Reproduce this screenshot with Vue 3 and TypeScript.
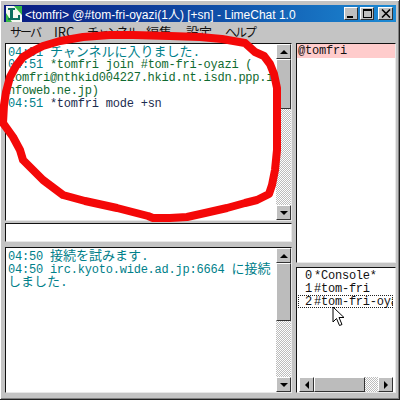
<template>
  <div class="window">
    <div class="titlebar">
      <svg class="app-icon" width="16" height="16" viewBox="0 0 16 16">
        <rect width="16" height="16" fill="#f4f8f0" />
        <path d="M8 0h8v9z" fill="#38b848" />
        <path d="M0 7l6 9H0z" fill="#38b848" />
        <path d="M2 2h7v2H7v8h5V9h2v5H2v-2h2V4H2z" fill="#0a6e5e" />
      </svg>
      <span class="title-text">&lt;tomfri&gt; @#tom-fri-oyazi(1人) [+sn] - LimeChat 1.0</span>
      <div class="title-buttons">
        <button class="win-btn"><i class="glyph-min" /></button>
        <button class="win-btn"><i class="glyph-max" /></button>
        <button class="win-btn close">
          <svg width="10" height="9" viewBox="0 0 10 9"><path d="M1 0.5l8 8M9 0.5l-8 8" stroke="#000" stroke-width="1.6" /></svg>
        </button>
      </div>
    </div>

    <div class="menubar">
      <span
        v-for="m in menus"
        :key="m.label"
        class="menu-item"
        :class="{ kana: m.kana }"
        :style="{ width: m.width + 'px' }"
      >{{ m.label }}</span>
    </div>

    <div class="panes">
      <div class="left-col">
        <div class="sunken log log-top">
          <div class="log-body">
            <div v-for="(line, i) in topLog" :key="i" class="line">
              <span v-for="(part, j) in line" :key="j" :class="part.c">{{ part.t }}</span>
            </div>
          </div>
          <div class="vscroll">
            <div class="sb-btn"><i class="tri up" /></div>
            <div class="thumb thumb-top"></div>
            <div class="track"></div>
            <div class="sb-btn"><i class="tri down" /></div>
          </div>
        </div>

        <div class="sunken input-box"></div>

        <div class="sunken log log-bottom">
          <div class="log-body">
            <div v-for="(line, i) in bottomLog" :key="i" class="line">
              <span v-for="(part, j) in line" :key="j" :class="part.c">{{ part.t }}</span>
            </div>
          </div>
          <div class="vscroll">
            <div class="sb-btn"><i class="tri up" /></div>
            <div class="thumb thumb-bottom"></div>
            <div class="track"></div>
            <div class="sb-btn"><i class="tri down" /></div>
          </div>
        </div>
      </div>

      <div class="right-col">
        <div class="sunken members">
          <div class="member-row">@tomfri</div>
        </div>
        <div class="sunken channels">
          <div class="channel-list">
            <div v-for="(c, i) in channels" :key="c" class="channel-row" :class="{ focused: i === 2 }">
              <span class="num">{{ i }}</span>{{ c }}
            </div>
          </div>
          <div class="hscroll">
            <div class="sb-btn"><i class="tri left" /></div>
            <div class="hthumb"></div>
            <div class="track"></div>
            <div class="sb-btn"><i class="tri right" /></div>
          </div>
        </div>
      </div>
    </div>

    <!-- hand-drawn circle on top of the screenshot -->
    <svg class="scribble" width="400" height="400" viewBox="0 0 400 400">
      <path
        d="M3 123 L4 105 L6 92 L10 77 L16 66 L23 57 L33 51 L43 46 L60 41 L83 37 L110 35 L133 35 L170 36 L200 37 L222 39 L245 43 L255 52 L264 56 L270 64 L274 74 L277 88 L277 130 L277 150 L275 170 L272 185 L269 194 L257 200 L245 203 L227 208 L205 213 L187 217 L170 218 L153 218 L148 216 L117 208 L85 201 L63 195 L55 189 L43 180 L33 170 L23 160 L20 150 L13 137 L8 130 Z"
        fill="none"
        stroke="#f40808"
        stroke-width="8"
        stroke-linejoin="round"
      />
    </svg>

    <svg class="cursor" width="14" height="22" viewBox="0 0 14 22">
      <path d="M1 1v15l3.500-3.500 3 7 2.500-1-3-7h5z" fill="#fff" stroke="#000" stroke-width="1" />
    </svg>
  </div>
</template>

<script setup lang="ts">
interface Part {
  t: string;
  c: string;
}

const menus = [
  { label: 'サーバ', width: 44, kana: true },
  { label: 'IRC', width: 33, kana: false },
  { label: 'チャンネル', width: 59, kana: true },
  { label: '編集', width: 40, kana: false },
  { label: '設定', width: 39, kana: false },
  { label: 'ヘルプ', width: 40, kana: true },
];

const topLog: Part[][] = [
  [
    { t: '04:51 ', c: 'teal' },
    { t: 'チャンネルに入りました.', c: 'teal cjk' },
  ],
  [
    { t: '04:51 ', c: 'teal' },
    { t: '*tomfri join #tom-fri-oyazi (', c: 'green' },
  ],
  [{ t: 'tomfri@nthkid004227.hkid.nt.isdn.ppp.i', c: 'green' }],
  [{ t: 'nfoweb.ne.jp)', c: 'green' }],
  [
    { t: '04:51 ', c: 'teal' },
    { t: '*tomfri mode +sn', c: 'navy' },
  ],
];

const bottomLog: Part[][] = [
  [
    { t: '04:50 ', c: 'teal' },
    { t: '接続を試みます.', c: 'teal cjk' },
  ],
  [
    { t: '04:50 irc.kyoto.wide.ad.jp:6664 ', c: 'teal' },
    { t: 'に接続', c: 'teal cjk' },
  ],
  [{ t: 'しました.', c: 'teal cjk' }],
];

const channels = ['*Console*', '#tom-fri', '#tom-fri-oyazi'];
</script>

<style>
body {
  background: #c0c0c0;
}
</style>

<style scoped>
.window {
  position: relative;
  box-sizing: border-box;
  width: 400px;
  height: 400px;
  padding: 5px 3px 4px 4px;
  overflow: hidden;
  background: #c4c4c4;
  border-right: 1px solid #222;
  border-bottom: 1px solid #222;
  box-shadow: inset 1px 1px 0 #fff, inset -1px -1px 0 #808080;
}

.titlebar {
  display: flex;
  align-items: center;
  height: 17px;
  padding: 0 3px 0 2px;
  background: linear-gradient(90deg, #0a1a80 0%, #1050a8 55%, #1c8ad4 100%);
  color: #fff;
  font: 12px "Liberation Sans", "Noto Sans CJK JP", sans-serif;
  white-space: nowrap;
}

.app-icon {
  flex-shrink: 0;
}

.title-text {
  margin-left: 3px;
}

.title-buttons {
  display: flex;
  gap: 2px;
  margin-left: auto;
}

.win-btn {
  display: flex;
  align-items: center;
  justify-content: center;
  box-sizing: border-box;
  width: 14px;
  height: 13px;
  padding: 0;
  border: 1px solid;
  border-color: #fff #333 #333 #fff;
  background: #c0c0c0;
}

.close {
  width: 15px;
  margin-left: 2px;
}

.glyph-min {
  width: 6px;
  height: 2px;
  margin: 6px 3px 0 0;
  background: #000;
}

.glyph-max {
  box-sizing: border-box;
  width: 9px;
  height: 9px;
  border: 1px solid #000;
  border-top-width: 2px;
}

.menubar {
  display: flex;
  align-items: center;
  height: 19px;
  padding-left: 6px;
  color: #111;
  font: 13px "Noto Sans CJK JP", "Liberation Sans", sans-serif;
  white-space: nowrap;
}

.menu-item {
  flex-shrink: 0;
}

.menu-item.kana {
  font-size: 12px;
  letter-spacing: -2px;
}

.panes {
  display: flex;
  gap: 4px;
  padding: 2px 0 0 1px;
}

.left-col {
  display: flex;
  flex-direction: column;
  width: 287px;
}

.right-col {
  display: flex;
  flex-direction: column;
  width: 100px;
}

.sunken {
  box-sizing: border-box;
  border: 1px solid;
  border-color: #111 #e8e8e8 #e8e8e8 #111;
  background: #fff;
}

.log {
  display: flex;
}

.log-top {
  height: 178px;
}

.input-box {
  height: 19px;
  margin-top: 2px;
}

.log-bottom {
  height: 146px;
  margin-top: 5px;
}

.log-body {
  flex: 1;
  min-width: 0;
  padding: 2px 0 0 2px;
  overflow: hidden;
}

.line {
  height: 13px;
  font: 12px/13px "Liberation Mono", "Noto Sans CJK JP", monospace;
  letter-spacing: -0.22px;
  white-space: nowrap;
}

.teal {
  color: #00808a;
}

.green {
  color: #106a30;
}

.navy {
  color: #1c2c50;
}

.cjk {
  font-size: 13px;
  letter-spacing: 0;
}

.vscroll {
  display: flex;
  flex-direction: column;
  flex-shrink: 0;
  width: 15px;
  height: 100%;
}

.hscroll {
  display: flex;
  flex-shrink: 0;
  height: 15px;
  margin: 0 2px;
}

.sb-btn {
  display: flex;
  align-items: center;
  justify-content: center;
  flex-shrink: 0;
  box-sizing: border-box;
  width: 15px;
  height: 15px;
  border: 1px solid;
  border-color: #fff #333 #333 #fff;
  background: #c0c0c0;
}

.thumb,
.hthumb {
  flex-shrink: 0;
  box-sizing: border-box;
  border: 1px solid;
  border-color: #fff #333 #333 #fff;
  background: #bcbcbc;
}

.thumb-top {
  height: 50px;
}

.thumb-bottom {
  height: 58px;
}

.hthumb {
  width: 51px;
}

.track {
  flex: 1;
  background: repeating-conic-gradient(#fff 0 25%, #bcbcbc 0 50%) 0 0 / 2px 2px;
}

.tri {
  width: 0;
  height: 0;
  border: 4px solid transparent;
}

.tri.up {
  margin-bottom: 4px;
  border-bottom-color: #000;
}

.tri.down {
  margin-top: 4px;
  border-top-color: #000;
}

.tri.left {
  margin-right: 4px;
  border-right-color: #000;
}

.tri.right {
  margin-left: 4px;
  border-left-color: #000;
}

.members {
  height: 220px;
}

.member-row {
  height: 13px;
  padding: 1px 0 0 1px;
  background: #ffcccc;
  color: #111;
  font: 12px/13px "Liberation Mono", monospace;
  letter-spacing: -0.22px;
}

.channels {
  display: flex;
  flex-direction: column;
  height: 126px;
  margin-top: 4px;
}

.channel-list {
  flex: 1;
  padding-top: 1px;
  overflow: hidden;
}

.channel-row {
  box-sizing: border-box;
  width: 95px;
  margin-left: 1px;
  height: 13px;
  padding: 1px 0 0 7px;
  color: #111;
  font: 12px/12px "Liberation Mono", monospace;
  letter-spacing: -0.22px;
  white-space: nowrap;
  overflow: hidden;
}

.channel-row.focused {
  outline: 1px dotted #222;
  outline-offset: -1px;
}

.num {
  margin-right: 2px;
}

.scribble {
  position: absolute;
  top: 0;
  left: 0;
  pointer-events: none;
}

.cursor {
  position: absolute;
  top: 306px;
  left: 332px;
}
</style>
